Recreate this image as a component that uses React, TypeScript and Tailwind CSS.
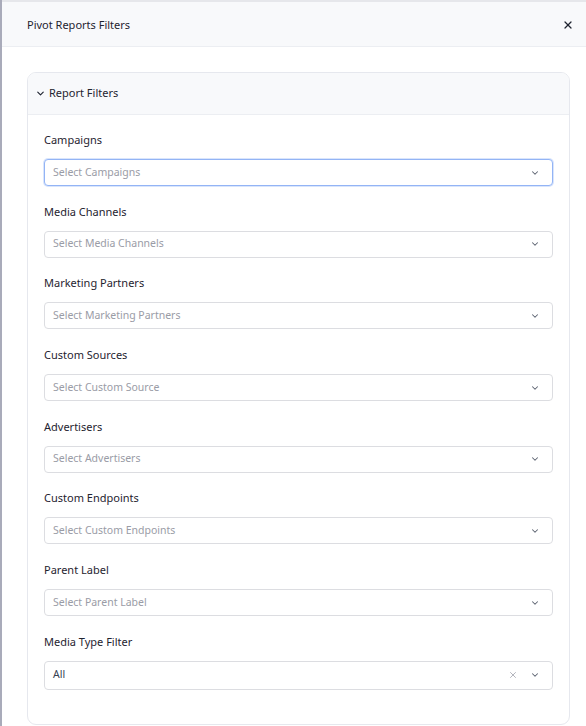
import { X, ChevronDown } from 'lucide-react';

const FILTERS = [
  { label: 'Campaigns', placeholder: 'Select Campaigns', focused: true },
  { label: 'Media Channels', placeholder: 'Select Media Channels' },
  { label: 'Marketing Partners', placeholder: 'Select Marketing Partners' },
  { label: 'Custom Sources', placeholder: 'Select Custom Source' },
  { label: 'Advertisers', placeholder: 'Select Advertisers' },
  { label: 'Custom Endpoints', placeholder: 'Select Custom Endpoints' },
  { label: 'Parent Label', placeholder: 'Select Parent Label' },
];

function Caret() {
  return <ChevronDown className="w-[10px] h-[10px] text-[#5b6270]" strokeWidth={2.5} />;
}

function SelectBox({ placeholder, focused }: { placeholder: string; focused?: boolean }) {
  return (
    <div
      className={`h-[27px] flex items-center justify-between pl-2 pr-[12px] rounded-[4px] border bg-white ${
        focused ? 'border-[#93b4f5] shadow-[0_0_0_1px_rgba(147,180,245,0.35)]' : 'border-[#dcdde1]'
      }`}
    >
      <span className="text-[10.5px] text-[#9a9ca6]">{placeholder}</span>
      <Caret />
    </div>
  );
}

export default function App() {
  return (
    <div className="w-[586px] h-[726px] bg-[#a9abba] pl-[2px] overflow-hidden" style={{ fontFamily: '"Noto Sans", "Open Sans", sans-serif' }}>
      <div className="h-full bg-white border-t-2 border-[#e6e7eb] flex flex-col">
        {/* Header */}
        <div className="h-[45px] shrink-0 bg-[#f8f9fb] border-b border-[#eceef2] flex items-center justify-between pl-[25px] pr-[12px]">
          <span className="text-[11px] text-[#1f2430] pt-[3px]">Pivot Reports Filters</span>
          <X className="w-[12px] h-[12px] text-[#1f2430] mt-[2px]" strokeWidth={2.5} />
        </div>

        {/* Body */}
        <div className="pt-[25px] pl-[25px] pr-[16px]">
          <div className="rounded-[9px] border border-[#e6e8ee] overflow-hidden">
            <div className="h-[42px] bg-[#f8f9fb] border-b border-[#eceef2] flex items-center gap-[3px] pl-[7px]">
              <ChevronDown className="w-[11px] h-[11px] text-[#1f2430]" strokeWidth={2.5} />
              <span className="text-[11px] text-[#1f2430]">Report Filters</span>
            </div>
            <div className="px-[16px] pt-[16px] pb-[34px] flex flex-col gap-[16.7px]">
              {FILTERS.map((f) => (
                <div key={f.label} className="flex flex-col gap-[10px]">
                  <span className="text-[11px] text-[#1f2430] leading-[18px]">{f.label}</span>
                  <SelectBox placeholder={f.placeholder} focused={f.focused} />
                </div>
              ))}
              <div className="flex flex-col gap-[10px]">
                <span className="text-[11px] text-[#1f2430] leading-[18px]">Media Type Filter</span>
                <div className="h-[29px] flex items-center justify-between pl-2 pr-[12px] rounded-[4px] border border-[#dcdde1] bg-white">
                  <span className="text-[10.5px] text-[#374151]">All</span>
                  <div className="flex items-center gap-[12px]">
                    <X className="w-[10px] h-[10px] text-[#9a9ca6]" strokeWidth={1.8} />
                    <Caret />
                  </div>
                </div>
              </div>
            </div>
          </div>
        </div>
      </div>
    </div>
  );
}
